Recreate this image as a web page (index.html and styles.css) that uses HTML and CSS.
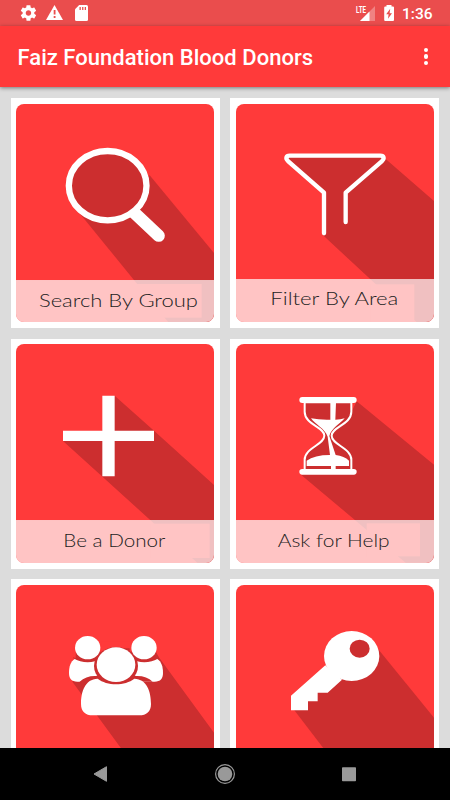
FILE: index.html
```html
<!DOCTYPE html>
<html lang="en">
<head>
	<meta charset="utf-8">
	<title>Faiz Foundation Blood Donors</title>

	<link rel="stylesheet" href="styles.css">
</head>

<body>

	<div class="screen">
		<div class="status">
			<svg class="notif" width="80" height="26" viewBox="0 0 80 26">
				<path transform="translate(5.100 3.600) scale(.78)" fill="#fff" d="M19.430 12.980c.04-.32.07-.64.07-.98s-.03-.66-.07-.98l2.110-1.650c.19-.15.24-.42.12-.64l-2-3.460c-.12-.22-.39-.3-.61-.22l-2.490 1c-.52-.4-1.080-.73-1.690-.98l-.38-2.650C14.460 2.180 14.250 2 14 2h-4c-.25 0-.46.18-.49.42l-.38 2.650c-.61.25-1.170.59-1.690.98l-2.490-1c-.23-.09-.49 0-.61.22l-2 3.460c-.13.22-.07.49.12.64l2.110 1.650c-.04.32-.07.65-.07.98s.03.66.07.98l-2.110 1.650c-.19.15-.24.42-.12.64l2 3.460c.12.22.39.3.61.22l2.490-1c.52.4 1.080.73 1.690.98l.38 2.650c.03.24.24.42.49.42h4c.25 0 .46-.18.49-.42l.38-2.650c.61-.25 1.170-.59 1.690-.98l2.490 1c.23.09.49 0 .61-.22l2-3.460c.12-.22.07-.49-.12-.64l-2.110-1.650zM12 15.500c-1.930 0-3.500-1.570-3.500-3.500s1.570-3.500 3.500-3.500 3.500 1.570 3.500 3.500-1.570 3.500-3.500 3.500z"/>
				<path d="M40.500 5L49 20H32z" fill="#fff"/>
				<path d="M39.700 10h1.800v4.600h-1.800zM39.700 16h1.800v1.900h-1.800z" fill="#ea4d4d"/>
				<path d="M65.200 5H72.500Q74 5 74 6.500V19.500Q74 21 72.500 21H62.500Q61 21 61 19.500V9.300z" fill="#fff"/>
				<path d="M65.500 7h1.300v3h-1.300zM68.100 7h1.300v3h-1.300zM70.700 7h1.300v3h-1.300z" fill="#ea4d4d"/>
			</svg>
			<svg class="signal" width="44" height="26" viewBox="0 0 44 26">
				<text class="lte" x="1" y="12.500" textLength="10" lengthAdjust="spacingAndGlyphs">LTE</text>
				<path d="M20 6V21H5L14 12H14.500V11.500z" fill="#fff" fill-opacity=".3"/>
				<path d="M14.500 11.500V21H5z" fill="#fff"/>
				<path d="M31.500 5h5v1.500H38q1 0 1 1V20q0 1-1 1H30.200q-1 0-1-1V7.500q0-1 1-1h1.300z" fill="#fff"/>
				<path d="M35.200 8.800L31.200 14.300H33.600L33 18.800L37 13.200H34.600z" fill="#ea4d4d"/>
			</svg>
			<span class="clock">1:36</span>
		</div>

		<div class="toolbar">
			<h1>Faiz Foundation Blood Donors</h1>
			<div class="more"><i></i><i></i><i></i></div>
		</div>

		<div class="menu">
			<div class="card">
				<svg class="tile" viewBox="0 0 594 656">
					<path class="shade" d="M401 214L594 447V656H458L192 329z"/>
					<path d="M350 322L428 395" stroke="#fff" stroke-width="37" stroke-linecap="round"/>
					<ellipse class="lens" cx="275" cy="245" rx="116.500" ry="104"/>
					<rect class="strip" y="528" width="594" height="140"/>
					<rect class="patch" x="354" y="540" width="203" height="101"/>
					<text class="label" x="69" y="609" textLength="477" lengthAdjust="spacingAndGlyphs">Search By Group</text>
				</svg>
			</div>

			<div class="card">
				<svg class="tile" viewBox="0 0 594 656">
					<path class="shade" d="M154 160H443L594 291V656H544L258 391L264 266z"/>
					<path class="funnel" d="M264 388V266L156 171C148 163 150 155 161 155H433C444 155 446 163 438 171L329 266V354"/>
					<rect class="strip" y="525" width="594" height="140"/>
					<rect class="patch" x="404" y="541" width="131" height="125"/>
					<text class="label" x="103" y="604" textLength="384" lengthAdjust="spacingAndGlyphs">Filter By Area</text>
				</svg>
			</div>

			<div class="card">
				<svg class="tile" viewBox="0 0 594 656">
					<path class="shade" d="M296 155L414 260L594 423V656H544L141 291L259 260z"/>
					<path fill="#fff" d="M259 155H296V260H414V291H296V397H259V291H141V260H259z"/>
					<rect class="strip" y="528" width="594" height="140"/>
					<rect class="patch" x="404" y="539" width="177" height="103"/>
					<text class="label" x="142" y="610" textLength="306" lengthAdjust="spacingAndGlyphs">Be a Donor</text>
				</svg>
			</div>

			<div class="card">
				<svg class="tile" viewBox="0 0 594 656">
					<path class="shade" d="M362 172L594 362V656H509L195 392L276 370V275L346 205z"/>
					<path class="glass" d="M206 175V203C206 242 265 248 265 275C265 302 206 312 206 347V378H346V347C346 312 287 302 287 275C287 248 346 242 346 203V175z"/>
					<rect class="bar" x="190" y="159" width="172" height="18" rx="9"/>
					<rect class="bar" x="190" y="375" width="172" height="17" rx="8.500"/>
					<path fill="#fff" d="M283 176H300L298 227Q314 227 326 223C316 236 286 252 280 276L299 333Q325 336 339 350V366H299V377H285V366H212V350Q235 333 282 333L275 278C267 254 237 241 225 223Q251 228 283 227z"/>
					<rect class="strip" y="528" width="594" height="140"/>
					<rect class="patch" x="392" y="538" width="160" height="99"/>
					<text class="label" x="125" y="610" textLength="336" lengthAdjust="spacingAndGlyphs">Ask for Help</text>
				</svg>
			</div>

			<div class="card">
				<svg class="tile" viewBox="0 0 594 656">
					<path class="shade" d="M345 186L421 206L594 443V656H437L168 289H410V230z"/>
					<path fill="#fff" d="M177 221C163 229 159 246 159 264C159 281 167 290 184 290H416C433 290 441 281 441 264C441 246 437 229 423 221z"/>
					<path class="shade" d="M171 219Q215 245 259 219V190H341V219Q385 245 429 219L420 200H180z"/>
					<path fill="#ff3a3a" d="M180 190H171L170 216L179 220zM256 170H344V186L256 200z"/>
					<path class="shade" d="M191 290Q210 272 240 273L300 250L360 273Q392 272 410 290H380V340H220z"/>
					<ellipse class="shade" cx="300" cy="243" rx="66" ry="57"/>
					<path fill="#fff" d="M245 281C207 282 195 320 195 357C195 380 209 391 230 391H370C391 391 405 380 405 357C405 320 393 282 355 281C327 303 273 303 245 281z"/>
					<ellipse class="head" cx="300" cy="239" rx="58" ry="52"/>
					<ellipse class="head" cx="215" cy="188" rx="38" ry="35"/>
					<ellipse class="head" cx="384" cy="188" rx="38" ry="35"/>
					<rect class="strip" y="528" width="594" height="140"/>
				</svg>
			</div>

			<div class="card">
				<svg class="tile" viewBox="0 0 594 656">
					<path class="shade" d="M428 194L594 398V656H390L175 376L300 250z"/>
					<ellipse class="head" cx="347" cy="213" rx="83" ry="75"/>
					<ellipse class="shade" cx="371" cy="191" rx="30" ry="27"/>
					<path fill="#fff" d="M268 241L165 332V376H216V349H245V323H275L318 284z"/>
					<rect class="strip" y="528" width="594" height="140"/>
				</svg>
			</div>
		</div>

		<div class="navbar">
			<svg width="450" height="53" viewBox="0 0 450 53">
				<path d="M94 26L106.500 18.700V33.300z" fill="#999" stroke="#999" stroke-linejoin="round"/>
				<circle cx="225" cy="26" r="7.300" fill="#999"/>
				<circle cx="225" cy="26" r="9.400" fill="none" stroke="#999" stroke-width="1.200"/>
				<rect x="342" y="19.300" width="14" height="14" rx=".8" fill="#999"/>
			</svg>
		</div>
	</div>

</body>

</html>
```

FILE: styles.css
```css
body {
	margin: 0;
	font-family: Roboto, "Liberation Sans", sans-serif;
	background: #dcdcdc;
}

.screen {
	width: 450px;
	height: 800px;
	display: flex;
	flex-direction: column;
	overflow: hidden;
}

svg {
	display: block;
}

.status {
	flex: none;
	height: 26px;
	display: flex;
	align-items: center;
	padding: 0 18px 0 14px;
	background: #ea4d4d;
	color: #fff;
}

.signal {
	margin-left: auto;
}

.lte {
	font-size: 9px;
	font-weight: 700;
	fill: #fff;
}

.clock {
	width: 30px;
	margin-left: 3px;
	padding-top: 2px;
	font-size: 15.500px;
	font-weight: 500;
	line-height: 24px;
	white-space: nowrap;
}

.toolbar {
	flex: none;
	height: 61px;
	display: flex;
	align-items: center;
	justify-content: space-between;
	padding: 0 22px 0 17.500px;
	background: #ff3a3a;
	color: #fff;
	box-shadow: 0 1px 4px rgba(0, 0, 0, 0.45);
	z-index: 1;
}

h1 {
	margin: 2px 0 0;
	font-size: 22px;
	font-weight: 500;
	letter-spacing: 0.02px;
	white-space: nowrap;
}

.more {
	display: grid;
	gap: 2.400px;
}

.more i {
	width: 4.400px;
	height: 4.400px;
	border-radius: 50%;
	background: #fff;
}

.menu {
	flex: 1;
	min-height: 0;
	display: grid;
	grid-template-columns: 209px 209px;
	grid-auto-rows: 230px;
	align-content: start;
	gap: 10.500px 10px;
	padding: 11px 11px 0;
	overflow: hidden;
}

.card {
	box-sizing: border-box;
	padding: 5.500px 6px 5.800px 5px;
	background: #fff;
}

.card:nth-child(even) {
	padding-left: 6px;
	padding-right: 5px;
}

.tile {
	width: 198px;
	height: 218.700px;
	border-radius: 8px;
	background: #ff3a3a;
}

.shade {
	fill: #cc2e2f;
}

.strip {
	fill: #fff;
	fill-opacity: 0.7;
}

.patch {
	fill: #ffc4c4;
}

.label {
	font-family: Lato, "Liberation Sans", sans-serif;
	font-size: 53px;
	font-weight: 300;
	fill: #222;
}

.lens {
	fill: #cc2e2f;
	stroke: #fff;
	stroke-width: 19px;
}

.funnel {
	fill: none;
	stroke: #fff;
	stroke-width: 13px;
	stroke-linecap: round;
	stroke-linejoin: round;
}

.glass {
	fill: #cc2e2f;
	stroke: #fff;
	stroke-width: 6px;
}

.bar,
.head {
	fill: #fff;
}

.navbar {
	flex: none;
	height: 52px;
	background: #000;
	z-index: 1;
}
```
